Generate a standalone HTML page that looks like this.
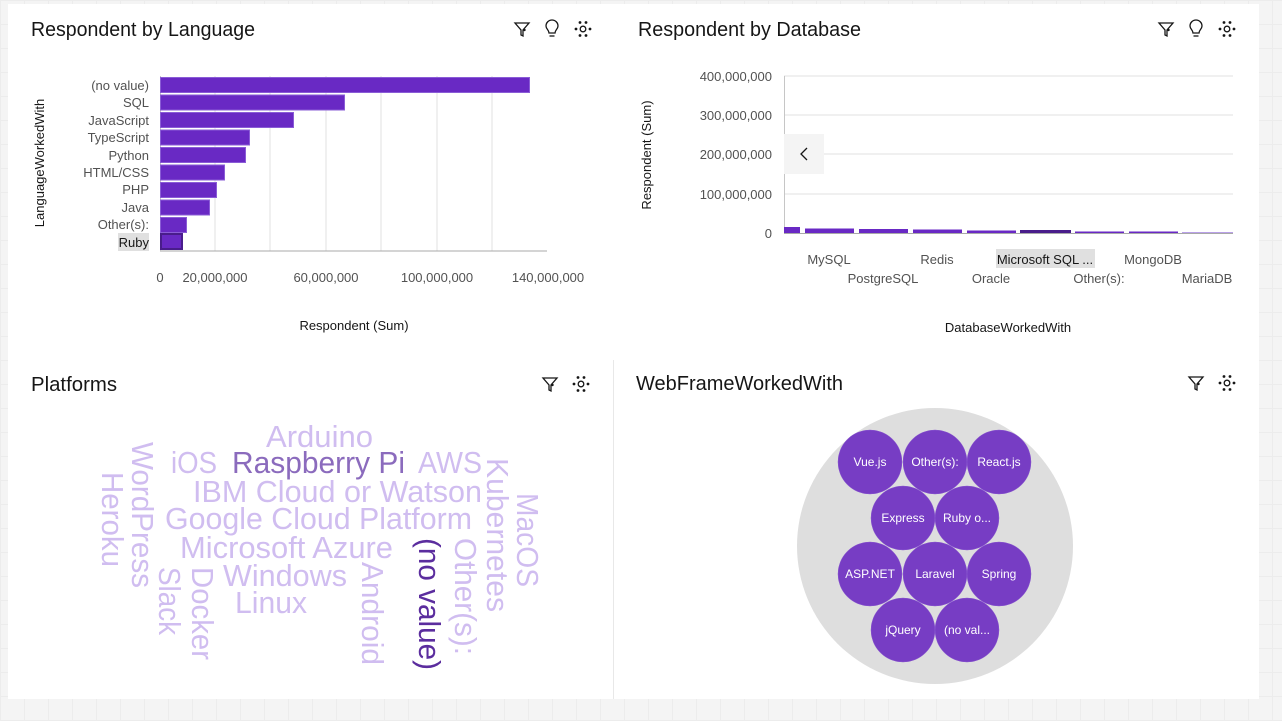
<!DOCTYPE html>
<html><head><meta charset="utf-8"><style>
html,body{margin:0;padding:0;width:1282px;height:721px;overflow:hidden;background:#f4f4f4;
background-image:linear-gradient(#ececec 1px,transparent 1px),linear-gradient(90deg,#ececec 1px,transparent 1px);background-size:24px 24px}
svg{position:absolute;left:0;top:0}
text{font-family:"Liberation Sans",sans-serif}
</style></head><body>
<svg width="1282" height="721" viewBox="0 0 1282 721">
<rect x="8" y="4" width="1251" height="695" fill="#fff"/>
<line x1="613.5" y1="360" x2="613.5" y2="699" stroke="#e8e8e8"/>

<g font-size="20" fill="#161616" lengthAdjust="spacingAndGlyphs">
<text x="31" y="36" textLength="224" lengthAdjust="spacingAndGlyphs">Respondent by Language</text>
<text x="638" y="36" textLength="223" lengthAdjust="spacingAndGlyphs">Respondent by Database</text>
<text x="31" y="391" textLength="86" lengthAdjust="spacingAndGlyphs">Platforms</text>
<text x="636" y="390" textLength="207" lengthAdjust="spacingAndGlyphs">WebFrameWorkedWith</text>
</g>

<defs>
<g id="fil" fill="none" stroke="#161616" stroke-width="1.3"><path d="M-7,-6 H7 L1,1 V7 L-1,6 V1 Z"/><circle cx="2.5" cy="1" r="1.2" fill="#161616" stroke="none"/></g>
<g id="bulb" fill="none" stroke="#161616" stroke-width="1.3"><path d="M-3,4 C-3,1 -6,0 -6,-3 A6,6 0 0 1 6,-3 C6,0 3,1 3,4 Z"/><path d="M-2.5,7 H2.5"/></g>
<g id="dots" fill="#161616"><circle cx="0" cy="0" r="2.8" fill="none" stroke="#161616" stroke-width="1.3"/><circle cx="-3" cy="-6.5" r="1.4"/><circle cx="3" cy="-6.5" r="1.4"/><circle cx="-7" cy="0" r="1.4"/><circle cx="7" cy="0" r="1.4"/><circle cx="-3" cy="6.5" r="1.4"/><circle cx="3" cy="6.5" r="1.4"/></g>
</defs>
<use href="#fil" x="522" y="29"/><use href="#bulb" x="552" y="29"/><use href="#dots" x="583" y="29"/>
<use href="#fil" x="1166" y="29"/><use href="#bulb" x="1196" y="29"/><use href="#dots" x="1227" y="29"/>
<use href="#fil" x="550" y="384"/><use href="#dots" x="581" y="384"/>
<use href="#fil" x="1196" y="383"/><use href="#dots" x="1227" y="383"/>

<g stroke="#e0e0e0">
<line x1="215" y1="76" x2="215" y2="251"/><line x1="270" y1="76" x2="270" y2="251"/><line x1="326" y1="76" x2="326" y2="251"/><line x1="381" y1="76" x2="381" y2="251"/><line x1="437" y1="76" x2="437" y2="251"/><line x1="492" y1="76" x2="492" y2="251"/>
</g>
<line x1="160" y1="251" x2="547" y2="251" stroke="#a8a8a8"/>
<line x1="160.5" y1="76" x2="160.5" y2="251" stroke="#c6c6c6"/>
<g fill="#6929c4" stroke="#8a5cd6" stroke-width="1">
<rect x="160.5" y="77.5" width="369" height="15"/>
<rect x="160.5" y="95" width="184" height="15"/>
<rect x="160.5" y="112.5" width="133" height="15"/>
<rect x="160.5" y="130" width="89" height="15"/>
<rect x="160.5" y="147.5" width="85" height="15"/>
<rect x="160.5" y="165" width="64" height="15"/>
<rect x="160.5" y="182.5" width="56" height="15"/>
<rect x="160.5" y="200" width="49" height="15"/>
<rect x="160.5" y="217.5" width="26" height="15"/>
</g>
<rect x="161" y="234" width="21" height="15" fill="#6929c4" stroke="#491d8b" stroke-width="2"/>
<rect x="118" y="233" width="31" height="18" fill="#e0e0e0"/>
<g font-size="13" fill="#525252" text-anchor="end">
<text x="149" y="90">(no value)</text><text x="149" y="107">SQL</text><text x="149" y="125">JavaScript</text><text x="149" y="142">TypeScript</text><text x="149" y="160">Python</text><text x="149" y="177">HTML/CSS</text><text x="149" y="194">PHP</text><text x="149" y="212">Java</text><text x="149" y="229">Other(s):</text><text x="149" y="247" fill="#161616">Ruby</text>
</g>
<g font-size="13" fill="#525252" text-anchor="middle">
<text x="160" y="282">0</text><text x="215" y="282">20,000,000</text><text x="326" y="282">60,000,000</text><text x="437" y="282">100,000,000</text><text x="548" y="282">140,000,000</text>
</g>
<text x="354" y="330" font-size="13" fill="#161616" text-anchor="middle">Respondent (Sum)</text>
<text transform="translate(44,163) rotate(-90)" font-size="13" fill="#161616" text-anchor="middle">LanguageWorkedWith</text>

<g stroke="#e0e0e0"><line x1="784" y1="76" x2="1233" y2="76"/><line x1="784" y1="115" x2="1233" y2="115"/><line x1="784" y1="154" x2="1233" y2="154"/><line x1="784" y1="194" x2="1233" y2="194"/></g>
<line x1="784.5" y1="76" x2="784.5" y2="233" stroke="#c6c6c6"/>
<rect x="784" y="134" width="40" height="40" fill="#f4f4f4"/>
<path d="M807,148 L801,154 L807,160" fill="none" stroke="#161616" stroke-width="1.3"/>
<g fill="#6929c4">
<rect x="784" y="227" width="16" height="6"/><rect x="805" y="228.5" width="49" height="4.5"/><rect x="859" y="229" width="49" height="4"/><rect x="913" y="229.5" width="49" height="3.5"/><rect x="967" y="230.5" width="49" height="2.5"/><rect x="1020" y="230" width="51" height="3" fill="#491d8b"/><rect x="1075" y="231.5" width="49" height="1.5"/><rect x="1129" y="231.5" width="49" height="1.5"/><rect x="1182" y="232" width="51" height="1" fill="#b9a0e8"/>
</g>
<line x1="784" y1="233.5" x2="1233" y2="233.5" stroke="#a8a8a8"/>
<g font-size="13" fill="#525252" text-anchor="end">
<text x="772" y="81">400,000,000</text><text x="772" y="120">300,000,000</text><text x="772" y="159">200,000,000</text><text x="772" y="199">100,000,000</text><text x="772" y="238">0</text>
</g>
<rect x="996" y="249" width="99" height="19" fill="#e0e0e0"/>
<g font-size="13" fill="#525252" text-anchor="middle">
<text x="829" y="264">MySQL</text><text x="937" y="264">Redis</text><text x="1045" y="264" fill="#161616">Microsoft SQL ...</text><text x="1153" y="264">MongoDB</text>
<text x="883" y="283">PostgreSQL</text><text x="991" y="283">Oracle</text><text x="1099" y="283">Other(s):</text><text x="1207" y="283">MariaDB</text>
</g>
<text x="1008" y="332" font-size="13" fill="#161616" text-anchor="middle">DatabaseWorkedWith</text>
<text transform="translate(651,155) rotate(-90)" font-size="13" fill="#161616" text-anchor="middle">Respondent (Sum)</text>

<g font-size="31" fill="#d0bdf0">
<text x="266" y="447" textLength="107" lengthAdjust="spacingAndGlyphs">Arduino</text>
<text x="171" y="473" textLength="46" lengthAdjust="spacingAndGlyphs">iOS</text>
<text x="232" y="473" textLength="173" lengthAdjust="spacingAndGlyphs" fill="#8b6bbd">Raspberry Pi</text>
<text x="418" y="473" textLength="64" lengthAdjust="spacingAndGlyphs">AWS</text>
<text x="193" y="502" textLength="289" lengthAdjust="spacingAndGlyphs">IBM Cloud or Watson</text>
<text x="165" y="529" textLength="307" lengthAdjust="spacingAndGlyphs">Google Cloud Platform</text>
<text x="180" y="558" textLength="213" lengthAdjust="spacingAndGlyphs">Microsoft Azure</text>
<text x="223" y="586" textLength="124" lengthAdjust="spacingAndGlyphs">Windows</text>
<text x="235" y="613" textLength="72" lengthAdjust="spacingAndGlyphs">Linux</text>
<text transform="translate(102,472) rotate(90)" textLength="95" lengthAdjust="spacingAndGlyphs">Heroku</text>
<text transform="translate(132,442) rotate(90)" textLength="146" lengthAdjust="spacingAndGlyphs">WordPress</text>
<text transform="translate(159,567) rotate(90)" textLength="68" lengthAdjust="spacingAndGlyphs">Slack</text>
<text transform="translate(192,567) rotate(90)" textLength="93" lengthAdjust="spacingAndGlyphs">Docker</text>
<text transform="translate(362,562) rotate(90)" textLength="103" lengthAdjust="spacingAndGlyphs">Android</text>
<text transform="translate(419,538) rotate(90)" textLength="132" lengthAdjust="spacingAndGlyphs" fill="#5b2d9e">(no value)</text>
<text transform="translate(455,538) rotate(90)" textLength="117" lengthAdjust="spacingAndGlyphs">Other(s):</text>
<text transform="translate(487,458) rotate(90)" textLength="154" lengthAdjust="spacingAndGlyphs">Kubernetes</text>
<text transform="translate(517,493) rotate(90)" textLength="94" lengthAdjust="spacingAndGlyphs">MacOS</text>
</g>

<circle cx="935" cy="546" r="138" fill="#dedede"/>
<g fill="#773dc4" stroke="#8a58d0" stroke-width="0.5">
<circle cx="870" cy="462" r="32"/><circle cx="935" cy="462" r="32"/><circle cx="999" cy="462" r="32"/>
<circle cx="903" cy="518" r="32"/><circle cx="967" cy="518" r="32"/>
<circle cx="870" cy="574" r="32"/><circle cx="935" cy="574" r="32"/><circle cx="999" cy="574" r="32"/>
<circle cx="903" cy="630" r="32"/><circle cx="967" cy="630" r="32"/>
</g>
<g font-size="12" fill="#fff" text-anchor="middle">
<text x="870" y="466">Vue.js</text><text x="935" y="466">Other(s):</text><text x="999" y="466">React.js</text>
<text x="903" y="522">Express</text><text x="967" y="522">Ruby o...</text>
<text x="870" y="578">ASP.NET</text><text x="935" y="578">Laravel</text><text x="999" y="578">Spring</text>
<text x="903" y="634">jQuery</text><text x="967" y="634">(no val...</text>
</g>
</svg>
</body></html>
